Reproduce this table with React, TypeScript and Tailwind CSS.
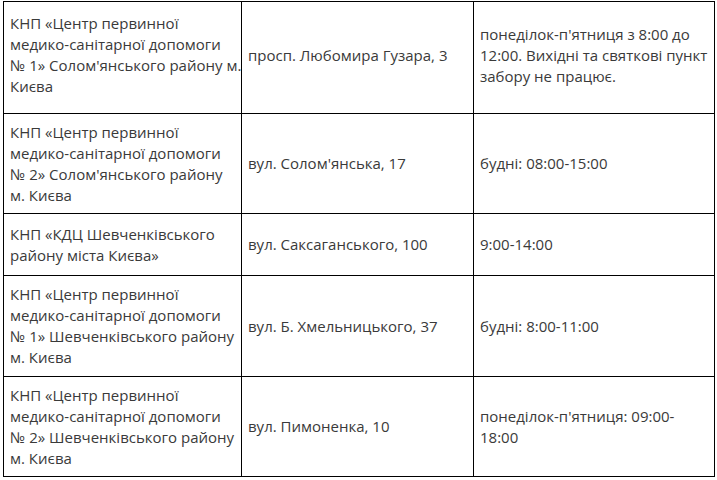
const rows: { h: string; pad: string; org: string[]; addr: string; hours: string[] }[] = [
  {
    h: "h-[112px]",
    pad: "pb-[5px]",
    org: ["КНП «Центр первинної", "медико-санітарної допомоги", "№ 1» Солом'янського району м.", "Києва"],
    addr: "просп. Любомира Гузара, 3",
    hours: ["понеділок-п'ятниця з 8:00 до", "12:00. Вихідні та святкові пункт", "забору не працює."],
  },
  {
    h: "h-[100px]",
    pad: "",
    org: ["КНП «Центр первинної", "медико-санітарної допомоги", "№ 2» Солом'янського району", "м. Києва"],
    addr: "вул. Солом'янська, 17",
    hours: ["будні: 08:00-15:00"],
  },
  {
    h: "h-[62px]",
    pad: "",
    org: ["КНП «КДЦ Шевченківського", "району міста Києва»"],
    addr: "вул. Саксаганського, 100",
    hours: ["9:00-14:00"],
  },
  {
    h: "h-[101px]",
    pad: "",
    org: ["КНП «Центр первинної", "медико-санітарної допомоги", "№ 1» Шевченківського району", "м. Києва"],
    addr: "вул. Б. Хмельницького, 37",
    hours: ["будні: 8:00-11:00"],
  },
  {
    h: "h-[100px]",
    pad: "",
    org: ["КНП «Центр первинної", "медико-санітарної допомоги", "№ 2» Шевченківського району", "м. Києва"],
    addr: "вул. Пимоненка, 10",
    hours: ["понеділок-п'ятниця: 09:00-", "18:00"],
  },
]

function Lines({ lines }: { lines: string[] }) {
  return (
    <>
      {lines.map((l, i) => (
        <span key={i} className="block whitespace-nowrap">
          {l}
        </span>
      ))}
    </>
  )
}

export default function App() {
  return (
    <div className="w-[717px] h-[480px] overflow-hidden bg-white pl-[3px] pt-[1px] font-['Open_Sans',sans-serif] text-[15px] leading-[21px] text-[#3a3a3a]">
      <table className="border-collapse table-fixed w-[711px]">
        <colgroup>
          <col className="w-[238px]" />
          <col className="w-[232px]" />
          <col className="w-[241px]" />
        </colgroup>
        <tbody>
          {rows.map((r, i) => (
            <tr key={i} className={r.h}>
              <td className={`border border-black px-[6px] align-middle ${r.pad}`}>
                <Lines lines={r.org} />
              </td>
              <td className={`border border-black px-[6px] align-middle whitespace-nowrap ${r.pad}`}>{r.addr}</td>
              <td className={`border border-black px-[6px] align-middle ${r.pad}`}>
                <Lines lines={r.hours} />
              </td>
            </tr>
          ))}
        </tbody>
      </table>
    </div>
  )
}
